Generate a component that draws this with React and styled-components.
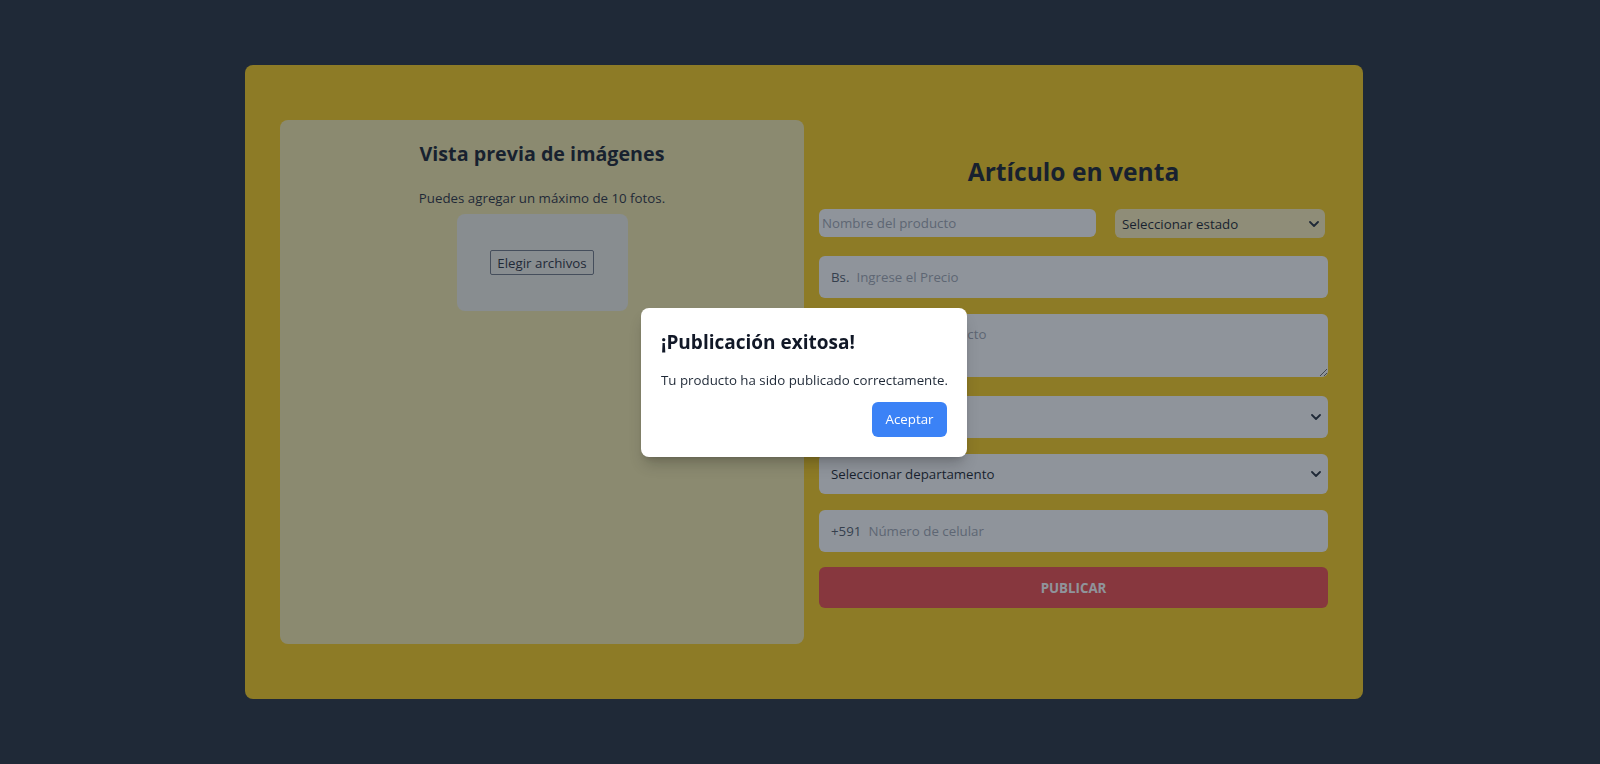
import React from "react";
import styled, { createGlobalStyle } from "styled-components";

const GlobalStyle = createGlobalStyle`
  * {
    box-sizing: border-box;
  }
  body {
    margin: 0;
    background-color: #1f2937;
    font-family: "Open Sans", "Noto Sans", Arial, sans-serif;
    color: #111827;
  }
`;

function Chevron() {
  return (
    <svg width="10" height="6" viewBox="0 0 10 6" fill="none">
      <path d="M1 1l4 4 4-4" stroke="#1f2937" strokeWidth="1.8" strokeLinecap="round" strokeLinejoin="round" />
    </svg>
  );
}

function App() {
  return (
    <>
      <GlobalStyle />
      <Page>
        <Card>
          <PreviewPanel>
            <PanelTitle>Vista previa de imágenes</PanelTitle>
            <Hint>Puedes agregar un máximo de 10 fotos.</Hint>
            <UploadBox>
              <FileButton type="button">Elegir archivos</FileButton>
            </UploadBox>
          </PreviewPanel>

          <FormColumn>
            <FormTitle>Artículo en venta</FormTitle>
            <TopRow>
              <PlainInput placeholder="Nombre del producto" />
              <SelectWrap $gap="0">
                <SmallSelect defaultValue="">
                  <option value="">Seleccionar estado</option>
                </SmallSelect>
                <ArrowIcon $right="6px">
                  <Chevron />
                </ArrowIcon>
              </SelectWrap>
            </TopRow>

            <Field $gap="16px">
              <Prefix>Bs.</Prefix>
              <FieldInput placeholder="Ingrese el Precio" />
            </Field>

            <TextAreaBox>
              <Description placeholder="Descripción del producto" />
            </TextAreaBox>

            <SelectWrap $gap="16px">
              <BigSelect defaultValue="" $height="42px">
                <option value="">Seleccionar categoría</option>
              </BigSelect>
              <ArrowIcon>
                <Chevron />
              </ArrowIcon>
            </SelectWrap>

            <SelectWrap $gap="16px">
              <BigSelect defaultValue="" $height="40px">
                <option value="">Seleccionar departamento</option>
              </BigSelect>
              <ArrowIcon>
                <Chevron />
              </ArrowIcon>
            </SelectWrap>

            <Field $gap="15px">
              <Prefix>+591</Prefix>
              <FieldInput placeholder="Número de celular" />
            </Field>

            <PublishButton type="button">PUBLICAR</PublishButton>
          </FormColumn>
        </Card>
      </Page>

      <Overlay>
        <Modal>
          <ModalTitle>¡Publicación exitosa!</ModalTitle>
          <ModalText>Tu producto ha sido publicado correctamente.</ModalText>
          <ModalActions>
            <AcceptButton type="button">Aceptar</AcceptButton>
          </ModalActions>
        </Modal>
      </Overlay>
    </>
  );
}

const Page = styled.div`
  min-height: 764px;
  display: flex;
  justify-content: center;
  align-items: center;
  padding-left: 8px;
`;

const Card = styled.div`
  width: 1118px;
  padding: 55px 35px;
  background-color: #facc15;
  border-radius: 8px;
  display: flex;
  align-items: center;
  gap: 15px;
`;

const PreviewPanel = styled.div`
  width: 524px;
  height: 524px;
  flex-shrink: 0;
  padding: 20px;
  background-color: #f7eba9;
  border-radius: 8px;
  display: flex;
  flex-direction: column;
  align-items: center;
`;

const PanelTitle = styled.h2`
  margin: 0 0 20px;
  font-size: 19.7px;
  line-height: 28px;
  font-weight: 700;
  color: #111827;
`;

const Hint = styled.p`
  margin: 0 0 6px;
  font-size: 13.3px;
  line-height: 20px;
  color: #1f2937;
`;

const UploadBox = styled.div`
  width: 171px;
  height: 97px;
  background-color: #f0f0e8;
  border-radius: 8px;
  display: flex;
  align-items: center;
  justify-content: center;
`;

const FileButton = styled.button`
  height: 25px;
  padding: 0 6px;
  font-family: inherit;
  font-size: 13.3px;
  color: #1f2937;
  background-color: transparent;
  border: 1px solid #6b7280;
  border-radius: 2px;
`;

const FormColumn = styled.div`
  flex: 1;
  display: flex;
  flex-direction: column;
`;

const FormTitle = styled.h1`
  margin: 0 0 21px;
  text-align: center;
  font-size: 24.6px;
  line-height: 32px;
  font-weight: 700;
  color: #111827;
`;

const TopRow = styled.div`
  display: grid;
  grid-template-columns: 277px 1fr;
  gap: 19px;
  margin-bottom: 18px;
  padding-right: 3px;
`;

const PlainInput = styled.input`
  height: 28px;
  padding: 0 3px;
  font-family: inherit;
  font-size: 13.3px;
  color: #111827;
  background-color: #ffffff;
  border: none;
  border-radius: 6px;
  outline: none;
  &::placeholder {
    color: #9ca3af;
  }
`;

const SelectWrap = styled.div`
  position: relative;
  margin-bottom: ${({ $gap }) => $gap};
`;

const ArrowIcon = styled.span`
  position: absolute;
  top: 50%;
  right: ${({ $right }) => $right || "7px"};
  transform: translateY(-50%);
  display: flex;
  pointer-events: none;
`;

const SmallSelect = styled.select`
  width: 100%;
  height: 29px;
  padding: 0 24px 0 7px;
  font-family: inherit;
  font-size: 13.3px;
  color: #111827;
  background-color: rgba(255, 255, 255, 0.7);
  border: none;
  border-radius: 6px;
  appearance: none;
  outline: none;
`;

const BigSelect = styled.select`
  width: 100%;
  height: ${({ $height }) => $height};
  padding: 0 28px 0 12px;
  font-family: inherit;
  font-size: 13.3px;
  color: #111827;
  background-color: #ffffff;
  border: none;
  border-radius: 6px;
  appearance: none;
  outline: none;
`;

const Field = styled.div`
  height: 42px;
  margin-bottom: ${({ $gap }) => $gap};
  padding: 0 12px;
  background-color: #ffffff;
  border-radius: 6px;
  display: flex;
  align-items: center;
  gap: 7px;
`;

const Prefix = styled.span`
  font-size: 13.3px;
  color: #4b5563;
`;

const FieldInput = styled.input`
  flex: 1;
  min-width: 0;
  padding: 0;
  font-family: inherit;
  font-size: 13.3px;
  color: #111827;
  background: transparent;
  border: none;
  outline: none;
  &::placeholder {
    color: #9ca3af;
  }
`;

const TextAreaBox = styled.div`
  margin-bottom: 19px;
`;

const Description = styled.textarea`
  display: block;
  width: 100%;
  height: 63px;
  padding: 11px 12px;
  font-family: inherit;
  font-size: 13.3px;
  color: #111827;
  background-color: #ffffff;
  border: none;
  border-radius: 6px;
  outline: none;
  &::placeholder {
    color: #9ca3af;
  }
`;

const PublishButton = styled.button`
  height: 41px;
  font-family: inherit;
  font-size: 13.3px;
  font-weight: 700;
  color: #ffffff;
  background-color: #ef4444;
  border: none;
  border-radius: 6px;
`;

const Overlay = styled.div`
  position: fixed;
  inset: 0;
  padding-left: 8px;
  background-color: rgba(31, 41, 55, 0.5);
  display: flex;
  align-items: center;
  justify-content: center;
`;

const Modal = styled.div`
  width: 326px;
  padding: 20px;
  background-color: #ffffff;
  border-radius: 8px;
  box-shadow: 0 10px 15px -3px rgba(0, 0, 0, 0.2), 0 4px 6px -4px rgba(0, 0, 0, 0.2);
`;

const ModalTitle = styled.h3`
  margin: 0 0 14px;
  font-size: 19px;
  line-height: 28px;
  font-weight: 700;
  color: #111827;
`;

const ModalText = styled.p`
  margin: 0;
  font-size: 13.3px;
  line-height: 20px;
  white-space: nowrap;
  color: #1f2937;
`;

const ModalActions = styled.div`
  display: flex;
  justify-content: flex-end;
  margin-top: 12px;
`;

const AcceptButton = styled.button`
  height: 35px;
  width: 75px;
  font-family: inherit;
  font-size: 13.3px;
  color: #ffffff;
  background-color: #3b82f6;
  border: none;
  border-radius: 6px;
`;

export default App;
